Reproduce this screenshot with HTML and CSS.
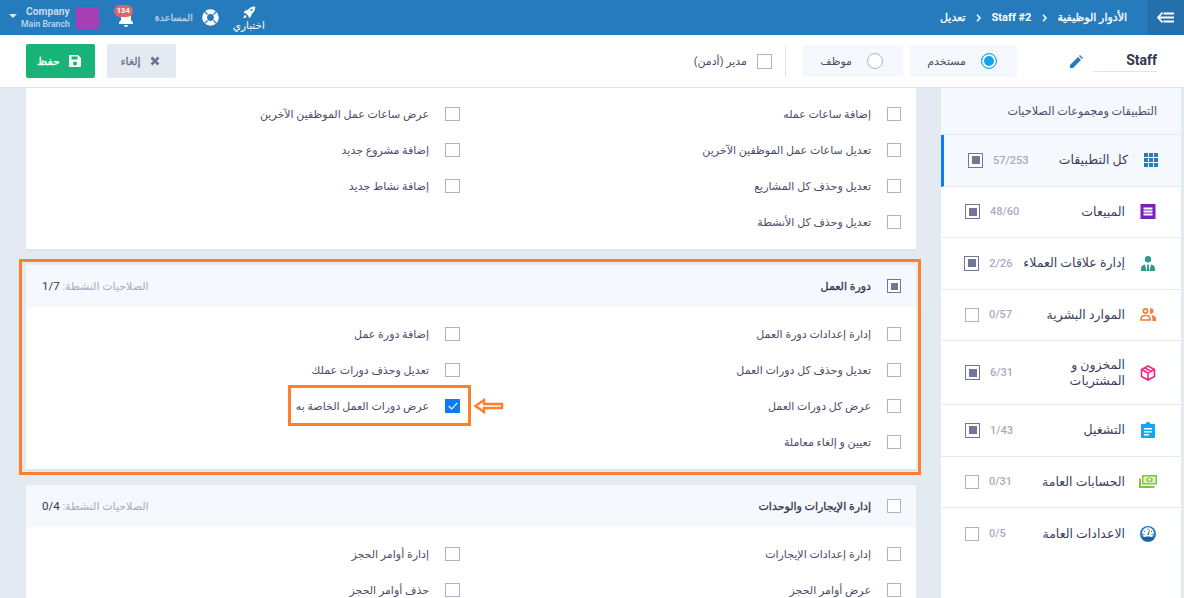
FILE: index.html
```html
<!DOCTYPE html>
<html lang="ar" dir="rtl">
<head>
<meta charset="utf-8">
<title>تعديل</title>
<link rel="stylesheet" href="styles.css">
</head>
<body>
<div class="app">
  <header class="topbar">
    <button class="toggle" aria-label="menu">
      <svg width="17" height="11" viewBox="0 0 17 11"><path d="M5.500 .7.900 5.500l4.600 4.800" fill="none" stroke="#fff" stroke-width="1.800"/><path d="M2 5.500h15M6.500 1.500H17M6.500 9.500H17" stroke="#fff" stroke-width="1.800"/></svg>
    </button>
    <nav class="crumbs">
      <span>الأدوار الوظيفية</span>
      <svg class="chev" width="5" height="8" viewBox="0 0 5 8"><path d="M1 .8 4 4 1 7.200" fill="none" stroke="#fff" stroke-width="1.500"/></svg>
      <span dir="ltr" class="crumb-en">Staff #2</span>
      <svg class="chev" width="5" height="8" viewBox="0 0 5 8"><path d="M1 .8 4 4 1 7.200" fill="none" stroke="#fff" stroke-width="1.500"/></svg>
      <span>تعديل</span>
    </nav>
    <div class="tools">
      <div class="trial">
        <svg width="16" height="13" viewBox="0 0 16 16"><path d="M15.500.5c-4-.3-7 1.400-9 4.500l-3 .5L1 8.500l3 .3 3.400 3.400.3 3 3-2.500.5-3c3-2 4.800-5.200 4.300-9.200zM3.500 11c-1.500.5-2.200 2-2.500 4 2-.3 3.500-1 4-2.500z" fill="#fff"/><circle cx="11" cy="5" r="1.300" fill="#267bbd"/></svg>
        <span>اختباري</span>
      </div>
      <div class="help">
        <svg width="17" height="17" viewBox="0 0 17 17"><circle cx="8.500" cy="8.500" r="8.300" fill="#fff"/><circle cx="8.500" cy="8.500" r="3.400" fill="#267bbd"/><path d="M2.500 2.500l3 3M14.500 2.500l-3 3M2.500 14.500l3-3M14.500 14.500l-3-3" stroke="#267bbd" stroke-width="1.300"/></svg>
        <span>المساعدة</span>
      </div>
      <div class="bell">
        <svg width="16" height="18" viewBox="0 0 16 18"><path d="M8 1a1.500 1.500 0 0 1 1.500 1.500C12 3.200 13 5.300 13 8v3l2 2.500V15H1v-1.500L3 11V8c0-2.700 1-4.800 3.500-5.500A1.500 1.500 0 0 1 8 1z" fill="#fff"/><path d="M6 16h4a2 2 0 0 1-4 0z" fill="#fff"/></svg>
        <span class="badge">134</span>
      </div>
      <div class="account">
        <span class="swatch"></span>
        <div class="names" dir="ltr"><b>Company</b><span>Main Branch</span></div>
        <span class="caret"></span>
      </div>
    </div>
  </header>

  <section class="toolbar">
    <div class="name" dir="ltr">Staff</div>
    <svg class="pencil" width="13" height="13" viewBox="0 0 13 13"><path d="M0 13V10L8 2l3 3-8 8zM9 1l1-1 3 3-1 1z" fill="#267bbd"/></svg>
    <label class="choice"><span class="radio on"></span><span>مستخدم</span></label>
    <label class="choice"><span class="radio"></span><span>موظف</span></label>
    <span class="divider"></span>
    <label class="admin"><span class="box"></span><span>مدير (أدمن)</span></label>
    <div class="actions">
      <button class="btn cancel">
        <svg width="10" height="10" viewBox="0 0 10 10"><path d="M1.500 1.500l7 7M8.500 1.500l-7 7" stroke="#6d7190" stroke-width="2.600"/></svg>
        <span>إلغاء</span>
      </button>
      <button class="btn save">
        <svg width="12" height="12" viewBox="0 0 12 12"><path d="M1 0h8l3 3v8a1 1 0 0 1-1 1H1a1 1 0 0 1-1-1V1a1 1 0 0 1 1-1zm1.500 1.500v3h6v-3zM6 6.500a2 2 0 1 0 0 4 2 2 0 0 0 0-4z" fill="#fff" fill-rule="evenodd"/></svg>
        <span>حفظ</span>
      </button>
    </div>
  </section>

  <div class="body">
    <aside class="sidebar">
      <h2 class="side-title">التطبيقات ومجموعات الصلاحيات</h2>
      <div class="item active">
        <svg class="ic" width="14" height="14" viewBox="0 0 14 14" fill="#267bbd"><path d="M0 0h4v4H0zM5 0h4v4H5zM10 0h4v4h-4zM0 5h4v4H0zM5 5h4v4H5zM10 5h4v4h-4zM0 10h4v4H0zM5 10h4v4H5zM10 10h4v4h-4z"/></svg>
        <span class="label">كل التطبيقات</span>
        <span class="count">57/253</span>
        <span class="box mixed"></span>
      </div>
      <div class="item">
        <svg class="ic" width="15" height="15" viewBox="0 0 15 15"><path d="M0 0h15v15H0z" fill="#7d1fc0"/><path d="M3 3.500h9v2H3zM3 6.500h9v2H3zM3 9.500h9v2H3z" fill="#fff"/></svg>
        <span class="label">المبيعات</span>
        <span class="count">48/60</span>
        <span class="box mixed"></span>
      </div>
      <div class="item">
        <svg class="ic" width="14" height="15" viewBox="0 0 14 15" fill="#2a9d8f"><circle cx="7" cy="3.300" r="3.200"/><path d="M0 15v-2.500C0 10.500 1.500 9 4 8.500l1.500 6.500zM14 15v-2.500c0-2-1.500-3.500-4-4L8.500 15zM6.200 8.500h1.600l.5 6.500H5.700z"/></svg>
        <span class="label">إدارة علاقات العملاء</span>
        <span class="count">2/26</span>
        <span class="box mixed"></span>
      </div>
      <div class="item">
        <svg class="ic" width="16" height="13" viewBox="0 0 16 13"><g fill="none" stroke="#f47b3a" stroke-width="1.700"><circle cx="5.500" cy="3" r="2.100"/><path d="M1 12v-1c0-2 2-3.500 4.500-3.500S10 9 10 11v1z"/></g><path d="M10 .6a2.500 2.500 0 0 1 3.500 2.400A2.500 2.500 0 0 1 10 5.400zM11.500 7c2.500.3 4.500 1.800 4.500 3.800V13h-3.500c0-2.500-.2-4.500-1-6z" fill="#f47b3a"/></svg>
        <span class="label">الموارد البشرية</span>
        <span class="count">0/57</span>
        <span class="box"></span>
      </div>
      <div class="item tall">
        <svg class="ic" width="15" height="16" viewBox="0 0 15 16" fill="none" stroke="#ec2a7c" stroke-width="1.600"><path d="M7.500 1 14 4.500v7L7.500 15 1 11.500v-7zM1 4.500l6.500 3.500L14 4.500M7.500 8v7M4 2.800l6.500 3.500"/></svg>
        <span class="label">المخزون و<br>المشتريات</span>
        <span class="count">6/31</span>
        <span class="box mixed"></span>
      </div>
      <div class="item">
        <svg class="ic" width="14" height="16" viewBox="0 0 14 16"><path d="M1 2h3.500a2.500 2 0 0 1 5 0H13a1 1 0 0 1 1 1v12a1 1 0 0 1-1 1H1a1 1 0 0 1-1-1V3a1 1 0 0 1 1-1z" fill="#0ea9ee"/><path d="M3 6h8v1.500H3zM3 9h8v1.500H3zM3 12h5v1.500H3z" fill="#fff"/></svg>
        <span class="label">التشغيل</span>
        <span class="count">1/43</span>
        <span class="box mixed"></span>
      </div>
      <div class="item">
        <svg class="ic" width="18" height="13" viewBox="0 0 18 13"><path d="M3 0h15v9.500H3z" fill="#84c341"/><path d="M4.500 1.500h12v6.500h-12z" fill="#dff0cc"/><ellipse cx="10.500" cy="4.700" rx="3.200" ry="2.300" fill="#84c341"/><ellipse cx="10.500" cy="4.700" rx="1.700" ry="1.100" fill="#fff"/><path d="M0 3.500h2v7.500h13.500v2H0z" fill="#84c341"/></svg>
        <span class="label">الحسابات العامة</span>
        <span class="count">0/31</span>
        <span class="box"></span>
      </div>
      <div class="item">
        <svg class="ic" width="16" height="16" viewBox="0 0 16 16"><circle cx="8" cy="8" r="8" fill="#267bbd"/><circle cx="8" cy="7" r="5.800" fill="#fff"/><path d="M8 2.500v1.500M3.800 5l1.200.8M12.200 5l-1.200.8M3 8.500h1.400M13 8.500h-1.400" stroke="#267bbd" stroke-width="1"/><path d="M7.200 8.800 9.300 4l.7.300-1.300 5z" fill="#267bbd"/><path d="M2.500 12c1.500-1 3.500-1.500 5.500-1.500s4 .5 5.500 1.500L12 14.500H4z" fill="#1c5f94"/></svg>
        <span class="label">الاعدادات العامة</span>
        <span class="count">0/5</span>
        <span class="box"></span>
      </div>
    </aside>

    <main class="content">
      <section class="card">
        <div class="rows">
          <div class="row"><span class="box"></span><span>إضافة ساعات عمله</span></div>
          <div class="row"><span class="box"></span><span>عرض ساعات عمل الموظفين الآخرين</span></div>
          <div class="row"><span class="box"></span><span>تعديل ساعات عمل الموظفين الآخرين</span></div>
          <div class="row"><span class="box"></span><span>إضافة مشروع جديد</span></div>
          <div class="row"><span class="box"></span><span>تعديل وحذف كل المشاريع</span></div>
          <div class="row"><span class="box"></span><span>إضافة نشاط جديد</span></div>
          <div class="row"><span class="box"></span><span>تعديل وحذف كل الأنشطة</span></div>
        </div>
      </section>

      <section class="card framed">
        <div class="card-head">
          <span class="box mixed"></span>
          <h3>دورة العمل</h3>
          <span class="active-count">الصلاحيات النشطة: <b>1/7</b></span>
        </div>
        <div class="rows">
          <div class="row"><span class="box"></span><span>إدارة إعدادات دورة العمل</span></div>
          <div class="row"><span class="box"></span><span>إضافة دورة عمل</span></div>
          <div class="row"><span class="box"></span><span>تعديل وحذف كل دورات العمل</span></div>
          <div class="row"><span class="box"></span><span>تعديل وحذف دورات عملك</span></div>
          <div class="row"><span class="box"></span><span>عرض كل دورات العمل</span></div>
          <div class="row marked">
            <span class="box checked"><svg width="10" height="8" viewBox="0 0 10 8"><path d="M.7 4l3 3L9.300.8" fill="none" stroke="#fff" stroke-width="1.100"/></svg></span>
            <span>عرض دورات العمل الخاصة به</span>
            <svg class="arrow" width="30" height="16" viewBox="0 0 30 16"><path d="M1.500 8 10 2v4h18v4H10v4z" fill="#fff" stroke="#fe7f2d" stroke-width="2.400"/></svg>
          </div>
          <div class="row"><span class="box"></span><span>تعيين و إلغاء معاملة</span></div>
        </div>
      </section>

      <section class="card">
        <div class="card-head">
          <span class="box"></span>
          <h3>إدارة الإيجارات والوحدات</h3>
          <span class="active-count">الصلاحيات النشطة: <b>0/4</b></span>
        </div>
        <div class="rows">
          <div class="row"><span class="box"></span><span>إدارة إعدادات الإيجارات</span></div>
          <div class="row"><span class="box"></span><span>إدارة أوامر الحجز</span></div>
          <div class="row"><span class="box"></span><span>عرض أوامر الحجز</span></div>
          <div class="row"><span class="box"></span><span>حذف أوامر الحجز</span></div>
        </div>
      </section>
    </main>
  </div>
</div>
</body>
</html>
```
FILE: styles.css
```css
* { box-sizing: border-box; }
html, body { margin: 0; height: 100%; overflow: hidden; }
body {
  font-family: Roboto, "DejaVu Sans", sans-serif;
  font-size: 12px;
  color: #4a4d68;
  background: #e4eaf2;
}
h2, h3 { margin: 0; font-weight: 400; }
button { font: inherit; border: 0; cursor: pointer; }

.app { height: 100vh; display: flex; flex-direction: column; overflow: hidden; }

/* top bar */
.topbar {
  height: 35px; flex: none;
  display: flex; align-items: center;
  background: #267bbd; color: #fff;
}
.toggle {
  width: 37px; height: 35px; flex: none;
  display: flex; align-items: center; justify-content: center;
  background: #2470ab; padding: 0;
}
.crumbs {
  display: flex; align-items: center; gap: 10.500px;
  margin-right: 20px;
  font-size: 11px; white-space: nowrap;
  -webkit-text-stroke: .3px #fff;
}
.crumb-en { font-weight: 700; -webkit-text-stroke: 0; }
.tools { margin-right: auto; display: flex; align-items: center; height: 35px; padding-left: 9px; }
.trial { display: flex; flex-direction: column; align-items: center; width: 34px; margin-left: 13px; line-height: 13px; font-size: 10.500px; padding-top: 2px; }
.help {
  display: flex; align-items: center; gap: 9px; margin-left: 19px;
  font-size: 9.500px; color: #bcd4e9; -webkit-text-stroke: .3px #bcd4e9;
}
.bell { position: relative; width: 20px; height: 24px; margin-left: 17px; display: flex; align-items: center; justify-content: center; }
.badge {
  position: absolute; top: -1px; left: -2px;
  width: 19px; height: 12px; border-radius: 6px;
  background: #d9686e; color: #fff;
  font-size: 7.500px; font-weight: 700; line-height: 12px; text-align: center;
}
.account { display: flex; align-items: center; gap: 6px; }
.swatch { width: 23px; height: 22px; background: #a83fb5; }
.names { display: flex; flex-direction: column; align-items: flex-end; line-height: 12px; color: #c5d9ec; }
.names b { font-size: 10.300px; }
.names span { font-size: 8.700px; font-weight: 500; }
.caret { width: 0; height: 0; margin-right: -2px; margin-bottom: 4px; border: 4px solid transparent; border-top: 4px solid #dbe8f3; border-bottom: 0; }

/* tool bar */
.toolbar {
  height: 53px; flex: none;
  display: flex; align-items: center;
  padding: 0 27px 0 26px;
  background: #fff; border-bottom: 1px solid #dfe3ea;
}
.name {
  width: 64px; height: 22px;
  border-bottom: 1px solid #dfe3ea;
  font-size: 14px; font-weight: 700; color: #33364f; line-height: 20px;
  text-align: right;
}
.pencil { margin: 0 10px 0 0; }
.choice {
  height: 32px; display: flex; align-items: center; gap: 15px;
  padding: 0 20px; background: #f5f8fc; font-size: 11px;
}
.choice:nth-of-type(1) { margin-right: 53px; width: 107px; }
.choice:nth-of-type(2) { margin-right: 7px; width: 101px; }
.radio {
  width: 16px; height: 16px; flex: none;
  border: 1px solid #b0b2c8; border-radius: 50%; background: #fff;
}
.radio.on { border-color: #0ea5ee; box-shadow: inset 0 0 0 2px #fff; background: #0ea5ee; }
.divider { width: 1px; height: 32px; background: #dfe3ea; margin: 0 16px 0 13px; }
.admin { display: flex; align-items: center; gap: 10px; font-size: 11px; }
.admin .box { width: 15px; height: 15px; }
.actions { margin-right: auto; display: flex; gap: 12px; }
.btn {
  width: 69px; height: 34px; border-radius: 2px; padding: 0 3px 0 0;
  display: flex; align-items: center; justify-content: center; gap: 9px;
  font-size: 11px;
}
.btn.cancel { background: #e4eaf2; color: #6d7190; -webkit-text-stroke: .3px #6d7190; }
.btn.save { background: #17b377; color: #fff; -webkit-text-stroke: .3px #fff; }

/* checkboxes */
.box {
  width: 14px; height: 14px; flex: none;
  display: inline-flex; align-items: center; justify-content: center;
  border: 1px solid #b0b2c8; background: #fff;
}
.box.mixed { width: 15px; height: 15px; border: 1.500px solid #73769a; }
.box.mixed::before { content: ""; width: 8px; height: 8px; background: #73769a; }
.box.checked { background: #0d7bf2; border-color: #0d7bf2; }

/* body */
.body { flex: 1; min-height: 0; display: flex; }

.sidebar {
  width: 240px; flex: none; margin-right: 3px;
  background: #fff; overflow: hidden;
}
.side-title {
  height: 47px; padding: 0 24px 0 0;
  display: flex; align-items: center;
  background: #f5f8fc; border-bottom: 1px solid #e4eaf2;
  font-size: 11.200px; color: #4a4d68;
}
.item {
  height: 51.500px; display: flex; align-items: center;
  padding: 0 24px 0 24px;
  border-bottom: 1px solid #e4eaf2;
}
.item:last-child { border-bottom: 0; }
.item.tall { height: 64px; }
.item.active { background: #f5f8fc; padding-right: 21px; border-left: 3px solid #0d7bf2; }
.item > .ic { width: 18px; flex: none; }
.label { margin-right: 14px; margin-left: auto; font-size: 12.500px; color: #3b3f5c; line-height: 16px; white-space: nowrap; }
.count {
  width: 34px; flex: none; margin-left: 10px;
  direction: ltr; text-align: left; font-size: 11px; font-weight: 500; color: #a8abc0; white-space: nowrap;
}

.content { flex: 1; min-width: 0; padding: 0 25px 0 26px; overflow: hidden; }
.card {
  background: #fff; margin-bottom: 14px;
  border-bottom: 2px solid #dfe5ec;
}
.card-head {
  height: 42px; display: flex; align-items: center; gap: 16px;
  padding: 0 15px 0 16px;
  background: #f5f8fc;
}
.card-head .box { width: 14px; height: 14px; }
.card-head .box.mixed::before { width: 7px; height: 7px; }
.card-head h3 { font-size: 11px; color: #33364f; -webkit-text-stroke: .3px #33364f; }
.active-count { margin-right: auto; font-size: 11px; color: #a8abc0; }
.active-count b { font-size: 11.500px; font-weight: 400; color: #33364f; }
.rows {
  display: grid; grid-template-columns: 441px 434px;
  padding: 8px 15px 9px 0;
}
.card-head + .rows { padding-top: 9px; }
.row { height: 36px; display: flex; align-items: center; gap: 16px; position: relative; font-size: 11px; white-space: nowrap; }
.row:nth-child(even) .box { width: 15px; }

.framed { position: relative; }
.framed::after {
  content: ""; position: absolute; pointer-events: none;
  top: -6px; bottom: -6px; left: -7px; right: -5px;
  border: 3px solid #fe7f2d;
}
.marked::after {
  content: ""; position: absolute; pointer-events: none;
  top: -3px; bottom: -2px; right: -11px; width: 177px;
  border: 3px solid #fe7f2d;
}
.arrow { position: absolute; right: -44px; top: 10px; }
```
